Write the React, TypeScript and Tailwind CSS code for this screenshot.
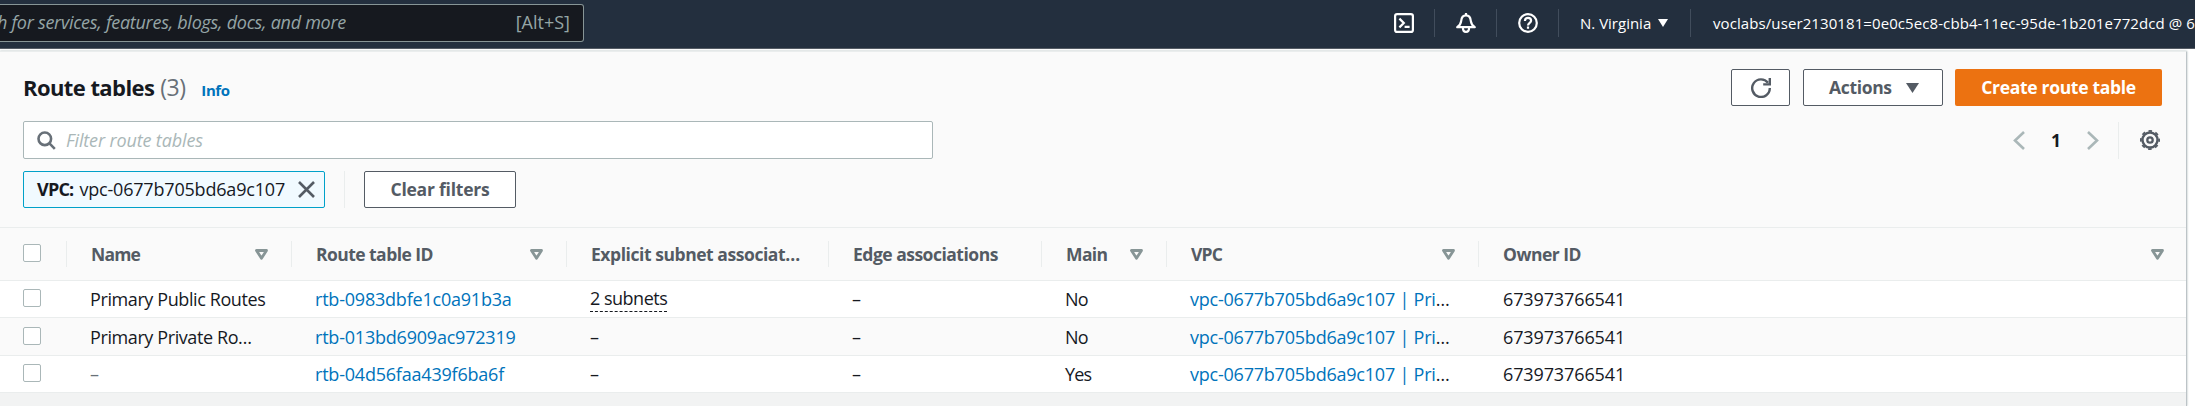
import type { ReactNode } from "react";

function NavDivider() {
  return <div className="h-7 w-px shrink-0 bg-[#414d5c]" />;
}

function CloudShellIcon() {
  return (
    <svg className="size-5 shrink-0" viewBox="0 0 20 20" fill="none" stroke="#fff" strokeWidth="2.2">
      <rect x="1.1" y="1.1" width="17.8" height="17.8" rx="2" />
      <path d="M5.4 5.6 9.8 10l-4.4 4.4M10.6 13.8h5" />
    </svg>
  );
}

function BellIcon() {
  return (
    <svg className="size-5 shrink-0" viewBox="0 0 20 20" fill="none" stroke="#fff" strokeWidth="2.2" strokeLinejoin="round">
      <path d="M10 0v2.4M1.2 14.2h17.6c-2.6-1.6-3.6-3.4-4-6.4-.4-3.6-2.2-5.4-4.8-5.4S5.6 4.2 5.2 7.8c-.4 3-1.4 4.8-4 6.4Z" />
      <path d="M6.9 14.4c0 2.8 1.2 4.4 3.1 4.4s3.1-1.6 3.1-4.4" />
    </svg>
  );
}

function HelpIcon() {
  return (
    <svg className="size-5 shrink-0" viewBox="0 0 20 20" fill="none" stroke="#fff" strokeWidth="2.2">
      <circle cx="10" cy="10" r="8.8" />
      <path d="M6.9 8c0-2 1.2-3.1 3.1-3.1s3.1 1.1 3.1 2.8c0 2.1-3.1 2.3-3.1 4.9M10 13.6v2.2" />
    </svg>
  );
}

function SearchIcon() {
  return (
    <svg className="size-[19px] shrink-0" viewBox="0 0 19 19" fill="none" stroke="#687078" strokeWidth="2.6">
      <circle cx="7.8" cy="7.8" r="6.3" />
      <path d="m12.2 12.2 5.6 5.6" />
    </svg>
  );
}

function RefreshIcon() {
  return (
    <svg className="size-5" viewBox="0 0 20 20" fill="none" stroke="#545b64" strokeWidth="2.4">
      <path d="M18.800 10A8.800 8.800 0 1 1 17 4.800" />
      <path d="M18.800 0v6.400h-6.600" />
    </svg>
  );
}

function GearIcon() {
  return (
    <svg className="size-5 shrink-0" viewBox="0 0 20 20" fill="none" stroke="#545b64">
      <circle cx="10" cy="10" r="7.5" strokeWidth="2.4" />
      <circle cx="10" cy="10" r="9.1" strokeWidth="1.8" strokeDasharray="3.57 3.577" strokeDashoffset="1.78" />
      <circle cx="10" cy="10" r="2.7" strokeWidth="2.3" />
    </svg>
  );
}

function SortIcon() {
  return (
    <svg className="h-[11px] w-[13px] shrink-0" viewBox="0 0 13 11" fill="none" stroke="#879596" strokeWidth="2.8" strokeLinejoin="round">
      <path d="M1.5 1.5h10l-5 7.8Z" />
    </svg>
  );
}

function Checkbox() {
  return <div className="size-[18px] rounded-[2px] border-[1.5px] border-[#aab7b8] bg-white" />;
}

type HeaderProps = { label: string; width: string; tracking: string; sort?: boolean; end?: string };

function HeaderCell({ label, width, tracking, sort, end = "pr-[23px]" }: HeaderProps) {
  return (
    <div className={`flex h-[26px] shrink-0 items-center justify-between border-l border-[#eaeded] pl-6 ${width} ${end}`}>
      <span className={`text-[17.5px] font-bold text-[#545b64] ${tracking}`}>{label}</span>
      {sort && <SortIcon />}
    </div>
  );
}

function Cell({ width, children }: { width: string; children: ReactNode }) {
  return <div className={`shrink-0 pl-6 ${width}`}>{children}</div>;
}

type Row = { name: string; id: string; subnets?: string; main: string; shade: string; height: string };

const rows: Row[] = [
  { name: "Primary Public Routes", id: "rtb-0983dbfe1c0a91b3a", subnets: "2 subnets", main: "No", shade: "bg-white", height: "h-[37px]" },
  { name: "Primary Private Ro…", id: "rtb-013bd6909ac972319", main: "No", shade: "bg-[#fafafa]", height: "h-[38px]" },
  { name: "", id: "rtb-04d56faa439f6ba6f", main: "Yes", shade: "bg-white", height: "h-[37px]" },
];

function TableRow({ row }: { row: Row }) {
  return (
    <div className={`flex items-center border-b border-[#eaeded] text-[18px] leading-6 text-[#16191f] ${row.height} ${row.shade}`}>
      <div className="w-[66px] shrink-0 pb-0.5 pl-[23px]">
        <Checkbox />
      </div>
      <Cell width="w-[225px]">
        {row.name ? <span className="tracking-[-0.4px]">{row.name}</span> : <span className="text-[#687078]">–</span>}
      </Cell>
      <Cell width="w-[275px]">
        <span className="tracking-[-0.21px] text-[#0073bb]">{row.id}</span>
      </Cell>
      <Cell width="w-[262px]">
        {row.subnets ? (
          <span className="inline-block border-b-[1.5px] border-dashed border-[#16191f] leading-[25px] tracking-[-0.5px]">{row.subnets}</span>
        ) : (
          "–"
        )}
      </Cell>
      <Cell width="w-[213px]">–</Cell>
      <Cell width="w-[125px]">
        <span className="tracking-[-0.8px]">{row.main}</span>
      </Cell>
      <Cell width="w-[312px]">
        <span className="tracking-[-0.22px]">
          <span className="text-[#0073bb]">vpc-0677b705bd6a9c107 | Pri</span>…
        </span>
      </Cell>
      <Cell width="w-[300px]">
        <span className="pl-px tracking-[-0.12px]">673973766541</span>
      </Cell>
    </div>
  );
}

export default function App() {
  return (
    <div className="h-[406px] w-[2195px] overflow-hidden bg-white font-['Open_Sans',sans-serif] whitespace-nowrap">
      <header className="flex h-[49px] items-start border-b border-[#545b64] bg-[#232f3e] text-[15px] text-white">
        <div className="mt-1 flex h-[38px] w-[584px] shrink-0 items-center justify-between rounded-r-[3px] border border-l-0 border-[#879596] bg-[#16191f] pr-[13px] text-[18px] text-[#95a5a6]">
          <div className="flex w-[346px] justify-end overflow-hidden">
            <span className="shrink-0 pb-0.5 tracking-[-0.27px] italic">Search for services, features, blogs, docs, and more</span>
          </div>
          <span className="pb-0.5">[Alt+S]</span>
        </div>
        <div className="flex h-[46px] shrink-0 items-center gap-5 pl-[810px]">
          <CloudShellIcon />
          <NavDivider />
          <div className="flex items-center gap-5 pl-px">
            <BellIcon />
            <NavDivider />
          </div>
          <div className="flex items-center gap-5 pl-px">
            <HelpIcon />
            <NavDivider />
          </div>
          <div className="flex items-center pl-px">
            <span className="w-[78px] pt-px">N. Virginia</span>
            <svg className="h-2 w-2.5" viewBox="0 0 10 8" fill="#fff">
              <path d="M0 0h10L5 8Z" />
            </svg>
            <div className="w-[22px]" />
            <NavDivider />
            <span className="pt-px pl-[22px] tracking-[0.09px]">voclabs/user2130181=0e0c5ec8-cbb4-11ec-95de-1b201e772dcd @ 6739-7376-6541</span>
          </div>
        </div>
      </header>

      <main className="mt-0.5 h-[355px] w-[2187px] border-t border-r border-t-[#eaeded] border-r-[#bcc3c7] bg-[#fafafa] shadow-[0_0_2px_#aab7b8]">
        <section className="h-[176px] border-b border-[#eaeded] pr-6 pl-[23px]">
          <div className="flex items-center justify-between pt-[17px]">
            <div className="flex items-baseline">
              <h1 className="text-[22px] font-bold tracking-[-0.58px] text-[#16191f]">Route tables</h1>
              <span className="w-[47px] pl-1.5 text-[23px] tracking-[-0.5px] text-[#687078]">(3)</span>
              <a className="text-[15px] font-bold tracking-[-0.4px] text-[#0073bb]">Info</a>
            </div>
            <div className="flex text-[17.5px] font-bold text-[#545b64]">
              <button className="flex h-[37px] w-[59px] items-center justify-center rounded-[2px] border border-[#545b64] bg-white">
                <RefreshIcon />
              </button>
              <button className="ml-[13px] flex h-[37px] w-[140px] items-center justify-between rounded-[2px] border border-[#545b64] bg-white pr-[23px] pl-[25px]">
                <span className="tracking-[-0.33px]">Actions</span>
                <svg className="h-2.5 w-[13px]" viewBox="0 0 13 10" fill="#545b64">
                  <path d="M0 0h13L6.5 10Z" />
                </svg>
              </button>
              <button className="ml-3 flex h-[37px] w-[207px] items-center justify-center rounded-[2px] bg-[#ec7211] tracking-[-0.32px] text-white">
                Create route table
              </button>
            </div>
          </div>

          <div className="mt-[15px] flex items-center justify-between">
            <div className="flex h-[38px] w-[910px] items-center gap-[10px] rounded-[2px] border border-[#aab7b8] bg-white pl-[13px]">
              <SearchIcon />
              <span className="text-[18px] tracking-[-0.13px] text-[#aab7b8] italic">Filter route tables</span>
            </div>
            <div className="flex items-center pr-0.5">
              <svg className="h-[19px] w-3" viewBox="0 0 12 19" fill="none" stroke="#aab7b8" strokeWidth="2.6">
                <path d="M11 1 2 9.5l9 8.5" />
              </svg>
              <span className="w-[62px] text-center text-[17.5px] font-bold text-[#16191f]">1</span>
              <svg className="h-[19px] w-3" viewBox="0 0 12 19" fill="none" stroke="#aab7b8" strokeWidth="2.6">
                <path d="m1 1 9 8.5L1 18" />
              </svg>
              <div className="mr-[21px] ml-[19px] h-[37px] w-px bg-[#eaeded]" />
              <GearIcon />
            </div>
          </div>

          <div className="mt-3 flex items-center">
            <div className="flex h-[37px] w-[302px] items-center justify-between rounded-[2px] border border-[#00a1c9] bg-[#f1faff] pr-[9px] pl-[13px] text-[18px] text-[#16191f]">
              <span>
                <b className="tracking-[-0.8px]">VPC:</b>
                <span className="pl-[6px] tracking-[-0.19px]">vpc-0677b705bd6a9c107</span>
              </span>
              <svg className="size-[17px]" viewBox="0 0 17 17" fill="none" stroke="#545b64" strokeWidth="2.6">
                <path d="m1 1 15 15M16 1 1 16" />
              </svg>
            </div>
            <div className="mx-[19px] h-[37px] w-px bg-[#eaeded]" />
            <button className="h-[37px] w-[152px] rounded-[2px] border border-[#545b64] bg-white text-[17.5px] font-bold tracking-[-0.22px] text-[#545b64]">
              Clear filters
            </button>
          </div>
        </section>

        <section>
          <div className="flex h-[53px] items-center border-b border-[#eaeded]">
            <div className="w-[66px] shrink-0 pb-0.5 pl-[23px]">
              <Checkbox />
            </div>
            <HeaderCell label="Name" width="w-[225px]" tracking="tracking-[-0.8px]" sort />
            <HeaderCell label="Route table ID" width="w-[275px]" tracking="tracking-[-0.55px]" sort />
            <HeaderCell label="Explicit subnet associat…" width="w-[262px]" tracking="tracking-[-0.44px]" />
            <HeaderCell label="Edge associations" width="w-[213px]" tracking="tracking-[-0.5px]" />
            <HeaderCell label="Main" width="w-[125px]" tracking="tracking-[-0.6px]" sort />
            <HeaderCell label="VPC" width="w-[312px]" tracking="tracking-[-0.8px]" sort />
            <HeaderCell label="Owner ID" width="w-[708px]" tracking="tracking-[-0.5px]" end="pr-[22px]" sort />
          </div>
          {rows.map((row) => (
            <TableRow key={row.id} row={row} />
          ))}
          <div className="h-[14px] bg-[#f2f3f3]" />
        </section>
      </main>
    </div>
  );
}
